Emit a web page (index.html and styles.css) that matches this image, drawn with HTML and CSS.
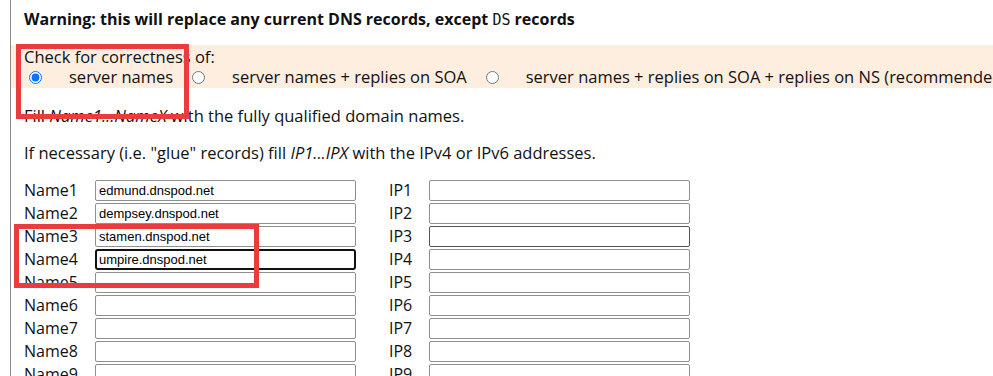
FILE: index.html
```html
<!DOCTYPE html>
<html lang="en">
<head>
    <meta charset="UTF-8">
    <title>Change nameservers</title>
    <link rel="stylesheet" href="styles.css">
</head>
<body>
    <div class="page">
        <h3 class="warning">Warning: this will replace any current DNS records, except <code>DS</code> records</h3>

        <div class="check-box">
            <div>Check for correctness of:</div>
            <div class="check-options">
                <label><input type="radio" name="check" checked><span>server names</span></label>
                <label><input type="radio" name="check"><span>server names + replies on SOA</span></label>
                <label><input type="radio" name="check"><span>server names + replies on SOA + replies on NS (recommended)</span></label>
            </div>
        </div>

        <p class="fill-names">Fill <i>Name1...NameX</i> with the fully qualified domain names.</p>
        <p class="fill-ips">If necessary (i.e. "glue" records) fill <i>IP1...IPX</i> with the IPv4 or IPv6 addresses.</p>

        <table class="ns-table">
            <tr><td class="lbl">Name1</td><td><input type="text" value="edmund.dnspod.net"></td><td class="lbl ip">IP1</td><td><input type="text"></td></tr>
            <tr><td class="lbl">Name2</td><td><input type="text" value="dempsey.dnspod.net"></td><td class="lbl ip">IP2</td><td><input type="text"></td></tr>
            <tr><td class="lbl">Name3</td><td><input type="text" value="stamen.dnspod.net"></td><td class="lbl ip">IP3</td><td><input type="text" class="dark"></td></tr>
            <tr><td class="lbl">Name4</td><td><input type="text" value="umpire.dnspod.net" class="focused"></td><td class="lbl ip">IP4</td><td><input type="text"></td></tr>
            <tr><td class="lbl">Name5</td><td><input type="text"></td><td class="lbl ip">IP5</td><td><input type="text"></td></tr>
            <tr><td class="lbl">Name6</td><td><input type="text"></td><td class="lbl ip">IP6</td><td><input type="text"></td></tr>
            <tr><td class="lbl">Name7</td><td><input type="text"></td><td class="lbl ip">IP7</td><td><input type="text"></td></tr>
            <tr><td class="lbl">Name8</td><td><input type="text"></td><td class="lbl ip">IP8</td><td><input type="text"></td></tr>
            <tr><td class="lbl">Name9</td><td><input type="text"></td><td class="lbl ip">IP9</td><td><input type="text"></td></tr>
        </table>

        <!-- annotation boxes drawn on top of the screenshot -->
        <div class="mark mark-check"></div>
        <div class="mark mark-names"></div>
    </div>
</body>
</html>
```

FILE: styles.css
```css
body {
    margin: 0;
    font-family: "Open Sans", "Noto Sans", sans-serif;
    font-size: 16.5px;
    color: #111;
    background: #fff;
    overflow: hidden;
}
.page {
    position: relative;
    margin-left: 10px;
    border-left: 1px solid #8a8a8a;
    padding-left: 13px;
    min-height: 376px;
    white-space: nowrap;
}
.warning {
    margin: 0;
    padding-top: 8px;
    height: 37px;
    font-size: 16px;
    font-weight: bold;
}
.warning code {
    font-family: "DejaVu Sans Mono", monospace;
    font-weight: normal;
    font-size: 15px;
}
.check-box {
    background-color: #fdeee0;
    margin-left: -13px;
    padding-left: 13px;
    height: 43px;
    line-height: 20px;
    padding-top: 2px;
    box-sizing: border-box;
}
.check-options {
    display: flex;
    gap: 14px;
}
.check-options label {
    display: flex;
    align-items: center;
}
.check-options input {
    margin: 0 27px 0 5px;
    width: 13px;
    height: 13px;
}
p {
    margin: 0;
    line-height: 24px;
}
.fill-names {
    margin-top: 16px;
}
.fill-ips {
    margin-top: 13px;
}
.ns-table {
    border-collapse: collapse;
    margin-top: 15px;
    font-size: 16px;
}
.ns-table td {
    padding: 0 0 2px;
    height: 21px;
    line-height: 21px;
}
.lbl {
    width: 71px;
}
.lbl.ip {
    width: 40px;
    padding-left: 33px !important;
}
.ns-table input {
    width: 261px;
    height: 21px;
    box-sizing: border-box;
    border: 1px solid #8f8f8f;
    border-radius: 2px;
    padding: 1px 3px;
    font-family: "Liberation Sans", Arial, sans-serif;
    font-size: 13px;
    color: #000;
    display: block;
}
.ns-table input.dark {
    border-color: #555;
}
.ns-table input.focused {
    border: 2px solid #111;
    border-radius: 3px;
    padding: 0 2px;
}

.mark {
    position: absolute;
    border: 5px solid #ea3b3f;
}
.mark-check {
    left: 5px;
    top: 44px;
    width: 163px;
    height: 65px;
}
.mark-names {
    left: 3px;
    top: 224px;
    width: 235px;
    height: 54px;
}
```
